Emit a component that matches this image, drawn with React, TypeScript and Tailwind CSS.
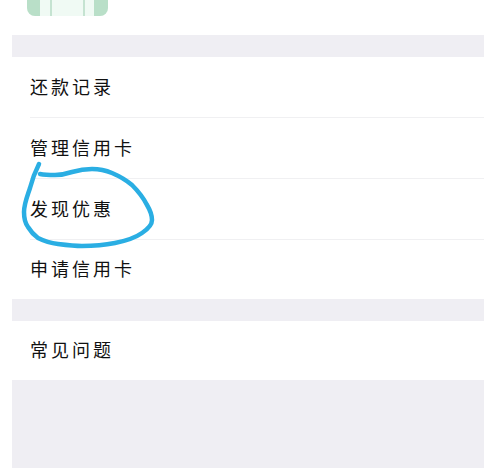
const rows = ['还款记录', '管理信用卡', '发现优惠'];

function Row({ label, height, last }: { label: string; height: string; last?: boolean }) {
  return (
    <div className="pl-[18px]">
      <div
        className={`flex items-center pb-[2px] text-[18px] tracking-[3px] text-[#111] ${height} ${last ? '' : 'border-b border-[#f0f0f2]'}`}
      >
        {label}
      </div>
    </div>
  );
}

function Doodle() {
  return (
    <svg className="absolute left-0 top-0" width="484" height="468" fill="none">
      <path
        d="M39 164C35 172 32 180 30 188C27 197 24 204 24 212C24 218 25 223 28 227C31 232 34 235 38 238C44 241 50 243 58 244C66 245 74 246 82 246C94 246 105 245 115 243C125 241 135 238 142 233C148 229 152 225 152 220C152 214 150 210 147 205C143 197 138 191 132 185C126 180 119 176 112 173C105 170 99 169 92 169C85 169 79 170 72 172C66 174 60 175 55 175C50 175 45 175 40 174"
        stroke="#2aaee3"
        strokeWidth="4.5"
        strokeLinecap="round"
      />
    </svg>
  );
}

export default function App() {
  return (
    <div className="relative h-[468px] w-[484px] overflow-hidden bg-white font-['Noto_Sans_CJK_SC',sans-serif]">
      <div className="ml-3">
        <div className="h-[35px] pl-[15px]">
          <div className="flex h-4 w-[81px] overflow-hidden rounded-b-lg bg-[#f0faf4]">
            <div className="w-[13px] bg-[#b9dfc8]" />
            <div className="ml-[10px] w-[2px] bg-[#c5e3d1]" />
            <div className="ml-[31px] w-[2px] bg-[#c5e3d1]" />
            <div className="ml-auto w-[14px] bg-[#b9dfc8]" />
          </div>
        </div>
        <div className="h-[22px] bg-[#efeef3]" />
        {rows.map((r) => (
          <Row key={r} label={r} height="h-[61px]" />
        ))}
        <Row label="申请信用卡" height="h-[59px]" last />
        <div className="h-[22px] bg-[#efeef3]" />
        <Row label="常见问题" height="h-[59px]" last />
        <div className="h-[88px] bg-[#efeef3]" />
      </div>
      <Doodle />
    </div>
  );
}
